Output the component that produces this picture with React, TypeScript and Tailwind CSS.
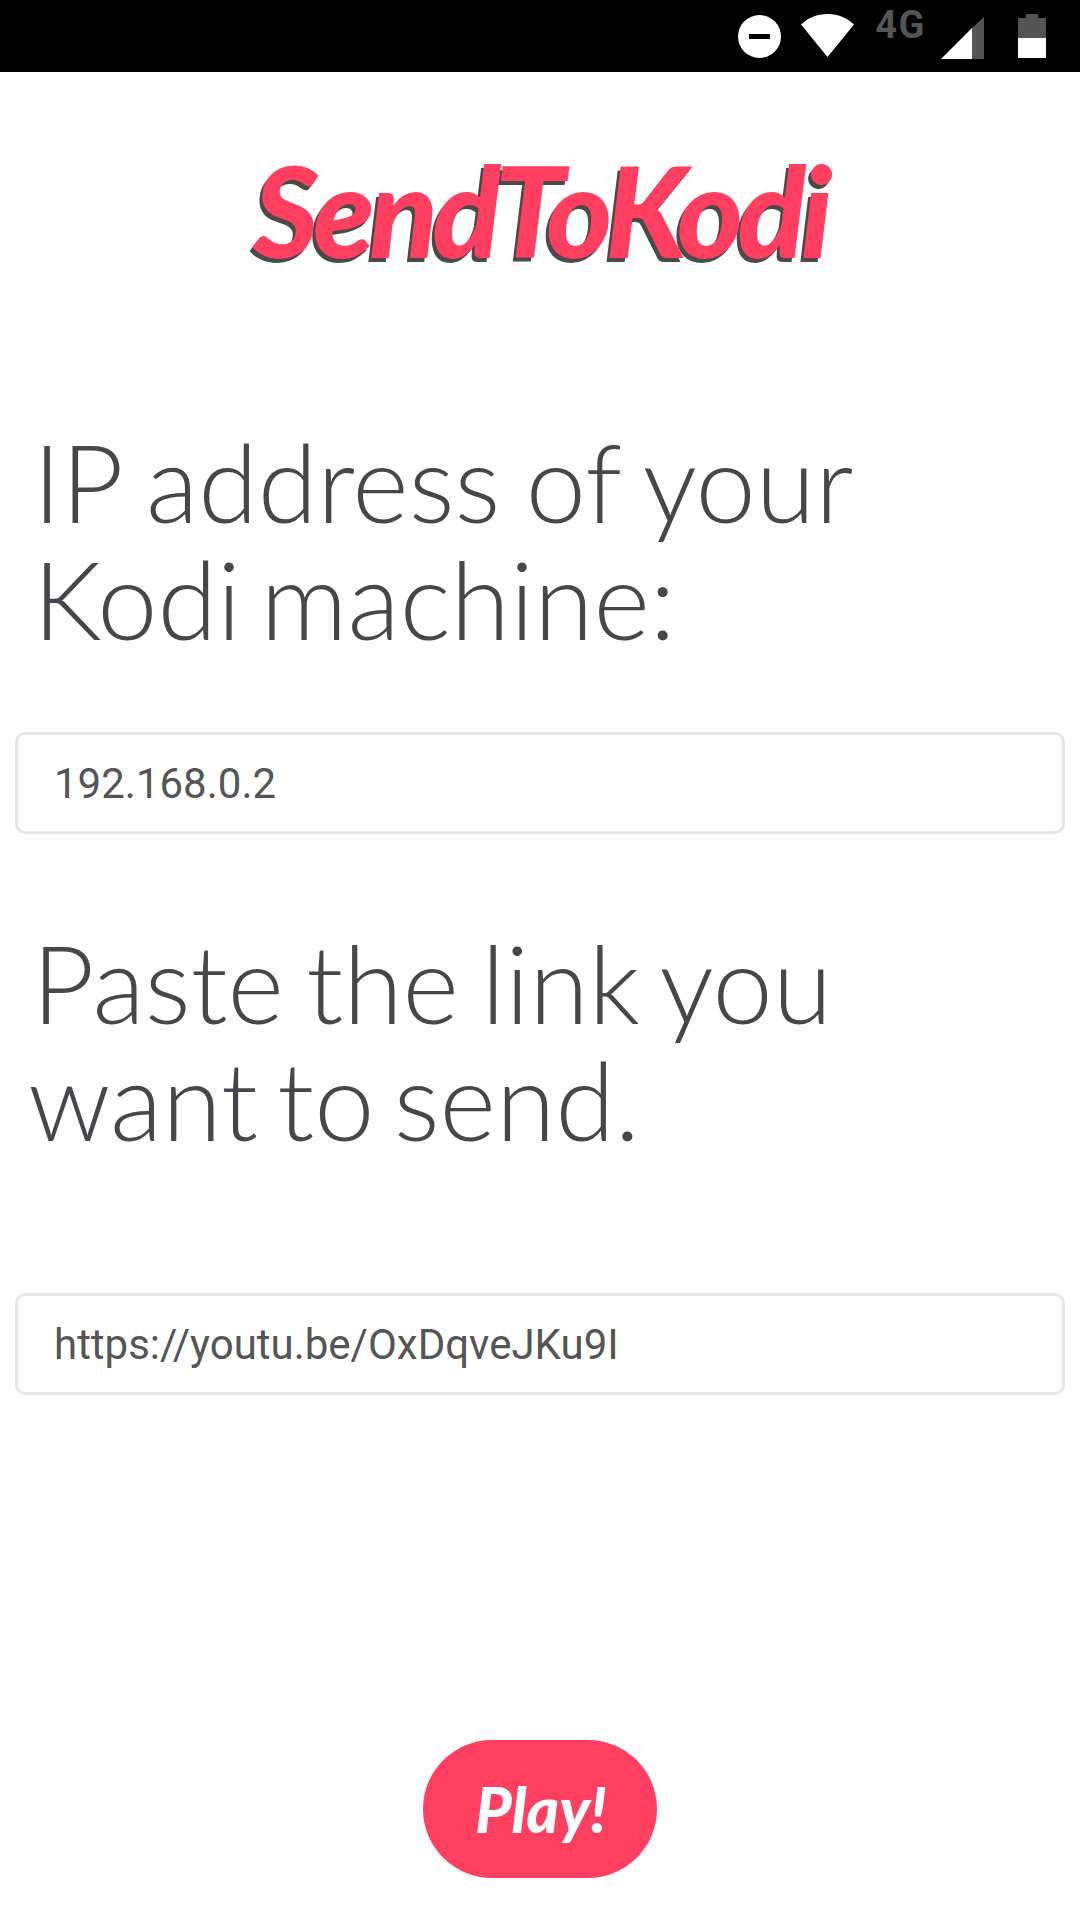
export default function App() {
  return (
    <div className="flex h-[1920px] w-[1080px] flex-col overflow-hidden bg-white font-['Lato',sans-serif]">
      <div className="flex h-[72px] items-start justify-end bg-black pr-[34px]">
        <svg className="mt-[15px]" width="43" height="43" viewBox="0 0 43 43">
          <circle cx="21.5" cy="21.5" r="21.5" fill="#fff" />
          <rect x="11" y="19" width="21" height="5" fill="#000" />
        </svg>
        <svg className="ml-[20px] mt-[14px]" width="53" height="43" viewBox="0 0 53 43">
          <path d="M0 10.5C7 4 16 0 26.5 0S46 4 53 10.5L26.5 43Z" fill="#fff" />
        </svg>
        <span className="ml-[21px] mt-[6px] font-['Roboto',sans-serif] text-[38px] font-bold leading-[38px] tracking-[1.5px] text-[#555]">4G</span>
        <svg className="ml-[15px] mt-[17px]" width="43" height="42" viewBox="0 0 43 42">
          <path d="M0 42L31 11V42Z" fill="#fff" />
          <path d="M31 11L43 0V42H31Z" fill="#555" />
        </svg>
        <svg className="ml-[34px] mt-[14px]" width="28" height="44" viewBox="0 0 28 44">
          <path d="M8 0H20V4H28V24H0V4H8Z" fill="#555" />
          <rect y="24" width="28" height="20" fill="#fff" />
        </svg>
      </div>

      <h1 className="mt-[71px] text-center text-[126px] font-black italic leading-[134px] tracking-[-5.5px] text-[#ff3e60] [text-shadow:-3px_4px_0_#4a4a4a]">
        SendToKodi
      </h1>

      <h2 className="mt-[146px] text-[108px] font-light leading-[117px] text-[#47474b]">
        <span className="block pl-[33px] [word-spacing:-4px]">IP address of your</span>
        <span className="block pl-[33px] [word-spacing:-10px]">Kodi machine:</span>
      </h2>

      <div className="mx-[15px] mt-[75px] flex h-[102px] items-center rounded-[10px] border-[3px] border-[#e6e6e6] pl-[36px] font-['Roboto',sans-serif] text-[42px] text-[#555]">
        192.168.0.2
      </div>

      <h2 className="mt-[90px] text-[108px] font-light leading-[117px] text-[#47474b]">
        <span className="block pl-[32px] [word-spacing:-7px]">Paste the link you</span>
        <span className="block pl-[28px] [word-spacing:-10px]">want to send.</span>
      </h2>

      <div className="mx-[15px] mt-[135px] flex h-[102px] items-center rounded-[10px] border-[3px] border-[#e6e6e6] pl-[36px] font-['Roboto',sans-serif] text-[42px] text-[#555]">
        https://youtu.be/OxDqveJKu9I
      </div>

      <button className="mx-auto mt-[345px] flex h-[138px] w-[234px] items-center justify-center rounded-[69px] bg-[#ff3e60] pl-[2px] text-[62px] font-black italic text-white">
        Play!
      </button>
    </div>
  );
}
